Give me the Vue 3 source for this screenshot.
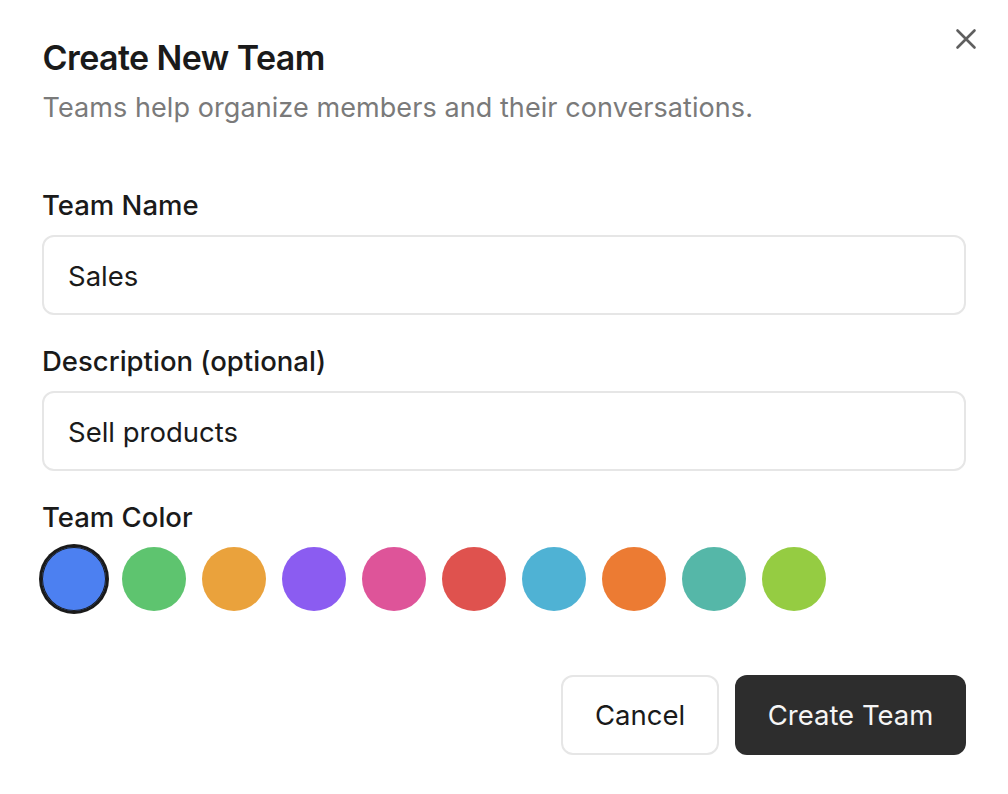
<script setup>
const colors = ['#4c80f1', '#5ec46f', '#eaa23c', '#8b5cf1', '#de5499', '#df524e', '#4fb2d4', '#ec7b33', '#55b7a8', '#95cc42']
</script>

<template>
  <div class="dialog">
    <button class="close" aria-label="Close">
      <svg width="24" height="24" viewBox="0 0 24 24" fill="none" stroke="#5f5f5f" stroke-width="2.6" stroke-linecap="round">
        <path d="M3.5 3.5 20.5 20.5M20.5 3.5 3.5 20.5" />
      </svg>
    </button>
    <h1 class="title">Create New Team</h1>
    <p class="subtitle">Teams help organize members and their conversations.</p>

    <label class="label first">Team Name</label>
    <input class="input" value="Sales" />

    <label class="label">Description (optional)</label>
    <input class="input" value="Sell products" />

    <label class="label">Team Color</label>
    <div class="swatches">
      <span
        v-for="(c, i) in colors"
        :key="c"
        class="swatch"
        :class="{ selected: i === 0 }"
        :style="{ background: c }"
      ></span>
    </div>

    <div class="actions">
      <button class="btn cancel">Cancel</button>
      <button class="btn primary">Create Team</button>
    </div>
  </div>
</template>

<style>
html, body { margin: 0; background: #fff; }
</style>

<style scoped>
.dialog {
  position: relative;
  box-sizing: border-box;
  width: 1008px;
  height: 794px;
  padding: 38px 42px 0;
  background: #fff;
  font-family: Inter, "Liberation Sans", sans-serif;
  color: #1a1a1a;
}
.close {
  position: absolute;
  top: 27px;
  right: 30px;
  padding: 0;
  border: 0;
  background: none;
  line-height: 0;
}
.title {
  margin: 0 0 0 0.5px;
  font-size: 34px;
  line-height: 40px;
  font-weight: 600;
  letter-spacing: -0.58px;
}
.subtitle {
  margin: 10px 0 0 0.5px;
  font-size: 27px;
  line-height: 40px;
  letter-spacing: 0.08px;
  color: #7a7a7a;
}
.label {
  display: block;
  margin: 30px 0 14px;
  font-size: 27.5px;
  line-height: 32px;
  font-weight: 450;
}
.label.first { margin-top: 61px; }
.input {
  display: block;
  box-sizing: border-box;
  width: 100%;
  height: 80px;
  padding: 2px 24px 0;
  border: 2px solid #e6e6e6;
  border-radius: 12px;
  outline: none;
  font: 400 27.5px Inter, "Liberation Sans", sans-serif;
  color: #1a1a1a;
}
.swatches {
  display: flex;
  gap: 16px;
}
.swatch {
  width: 64px;
  height: 64px;
  border-radius: 50%;
}
.swatch.selected {
  box-shadow: 0 0 0 3px #1a1a1a, inset 0 0 0 1px #1a1a1a;
}
.actions {
  display: flex;
  justify-content: flex-end;
  gap: 16px;
  margin-top: 64px;
}
.btn {
  box-sizing: border-box;
  height: 80px;
  border-radius: 12px;
  font: 400 27.5px Inter, "Liberation Sans", sans-serif;
}
.cancel {
  width: 158px;
  border: 2px solid #e6e6e6;
  background: #fff;
  color: #1a1a1a;
}
.primary {
  width: 231px;
  border: 0;
  background: #2d2d2d;
  color: #f5f5f5;
}
</style>
